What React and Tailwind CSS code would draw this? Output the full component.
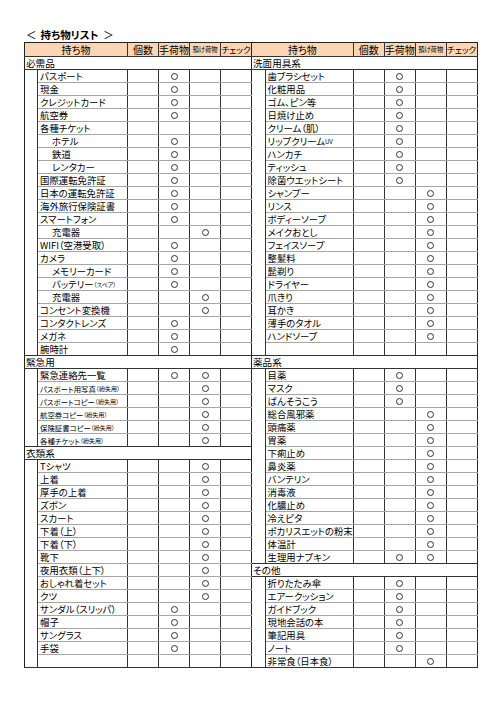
import React from "react";

// 0: なし / 1: 手荷物 / 2: 預け荷物 / 3: 両方
const it = (name, mark = 0, extra = {}) => ({ name, mark, ...extra });

const LEFT = [
  {
    cat: "必需品",
    items: [
      it("パスポート", 1),
      it("現金", 1),
      it("クレジットカード", 1),
      it("航空券", 1),
      it("各種チケット"),
      it("ホテル", 1, { sub: true }),
      it("鉄道", 1, { sub: true }),
      it("レンタカー", 1, { sub: true }),
      it("国際運転免許証", 1),
      it("日本の運転免許証", 1),
      it("海外旅行保険証書", 1),
      it("スマートフォン", 1),
      it("充電器", 2, { sub: true }),
      it("WIFI（空港受取）", 1),
      it("カメラ", 1),
      it("メモリーカード", 1, { sub: true }),
      it("バッテリー", 1, { sub: true, small: "（スペア）" }),
      it("充電器", 2, { sub: true }),
      it("コンセント変換機", 2),
      it("コンタクトレンズ", 1),
      it("メガネ", 1),
      it("腕時計", 1),
    ],
  },
  {
    cat: "緊急用",
    items: [
      it("緊急連絡先一覧", 3),
      it("パスポート用写真", 2, { tiny: true, small: "（紛失用）" }),
      it("パスポートコピー", 2, { tiny: true, small: "（紛失用）" }),
      it("航空券コピー", 2, { tiny: true, small: "（紛失用）" }),
      it("保険証書コピー", 2, { tiny: true, small: "（紛失用）" }),
      it("各種チケット", 2, { tiny: true, small: "（紛失用）" }),
    ],
  },
  {
    cat: "衣類系",
    items: [
      it("Tシャツ", 2),
      it("上着", 2),
      it("厚手の上着", 2),
      it("ズボン", 2),
      it("スカート", 2),
      it("下着（上）", 2),
      it("下着（下）", 2),
      it("靴下", 2),
      it("夜用衣類（上下）", 2),
      it("おしゃれ着セット", 2),
      it("クツ", 2),
      it("サンダル（スリッパ）", 1),
      it("帽子", 1),
      it("サングラス", 1),
      it("手袋", 1),
      it(""),
    ],
  },
];

const RIGHT = [
  {
    cat: "洗面用具系",
    items: [
      it("歯ブラシセット", 1),
      it("化粧用品", 1),
      it("ゴム、ピン等", 1),
      it("日焼け止め", 1),
      it("クリーム（肌）", 1),
      it("リップクリーム", 1, { small: "UV" }),
      it("ハンカチ", 1),
      it("ティッシュ", 1),
      it("除菌ウエットシート", 1),
      it("シャンプー", 2),
      it("リンス", 2),
      it("ボディーソープ", 2),
      it("メイクおとし", 2),
      it("フェイスソープ", 2),
      it("整髪料", 2),
      it("髭剃り", 2),
      it("ドライヤー", 2),
      it("爪きり", 2),
      it("耳かき", 2),
      it("薄手のタオル", 2),
      it("ハンドソープ", 2),
      it(""),
    ],
  },
  {
    cat: "薬品系",
    items: [
      it("目薬", 1),
      it("マスク", 1),
      it("ばんそうこう", 1),
      it("総合風邪薬", 2),
      it("頭痛薬", 2),
      it("胃薬", 2),
      it("下痢止め", 2),
      it("鼻炎薬", 2),
      it("バンテリン", 2),
      it("消毒液", 2),
      it("化膿止め", 2),
      it("冷えピタ", 2),
      it("ポカリスエットの粉末", 2),
      it("体温計", 2),
      it("生理用ナプキン", 3),
    ],
  },
  {
    cat: "その他",
    items: [
      it("折りたたみ傘", 1),
      it("エアークッション", 1),
      it("ガイドブック", 1),
      it("現地会話の本", 1),
      it("筆記用具", 1),
      it("ノート", 1),
      it("非常食（日本食）", 2),
    ],
  },
];

function Circle() {
  return <span className="block w-[7px] h-[7px] rounded-full border border-[#333]" />;
}

// セルの中身（高さ固定）
function Box({ className = "", children }) {
  return (
    <div className={`h-[12px] flex items-center whitespace-nowrap leading-[11px] ${className}`}>{children}</div>
  );
}

function Sheet({ groups, nameWidth, first }) {
  const vline = "border-l border-l-[#333]";
  const head = "p-0 font-normal border-b border-[#333]";
  return (
    <table
      className={`border-collapse table-fixed border-[#222] ${
        first ? "border-[1.5px]" : "border-y-[1.5px] border-r-[1.5px] border-l-0"
      }`}
    >
      <colgroup>
        <col className="w-[13px]" />
        <col style={{ width: nameWidth }} />
        <col className="w-[31px]" />
        <col className="w-[31px]" />
        <col className="w-[31px]" />
        <col className="w-[31px]" />
      </colgroup>
      <thead>
        <tr className="bg-[#fcd5b4]">
          <th colSpan={2} className={head}>
            <Box className="h-[13px] justify-center text-[10px]">持ち物</Box>
          </th>
          <th className={`${head} ${vline}`}>
            <Box className="h-[13px] justify-center text-[10px]">個数</Box>
          </th>
          <th className={`${head} ${vline}`}>
            <Box className="h-[13px] justify-center text-[10px]">手荷物</Box>
          </th>
          <th className={`${head} ${vline}`}>
            <Box className="h-[13px] justify-center text-[6.3px]">預け荷物</Box>
          </th>
          <th className={`${head} ${vline}`}>
            <Box className="h-[13px] justify-center text-[8.5px]">チェック</Box>
          </th>
        </tr>
      </thead>
      <tbody>
        {groups.map((g) => (
          <React.Fragment key={g.cat}>
            <tr>
              <td colSpan={6} className="p-0 border-b border-[#333]">
                <Box className="pl-px text-[9.6px]">{g.cat}</Box>
              </td>
            </tr>
            {g.items.map((item, i) => {
              const last = i === g.items.length - 1;
              const hline = last ? "border-b border-b-[#333]" : "border-b border-b-[#a6a6a6]";
              return (
                <tr key={g.cat + i}>
                  {i === 0 && (
                    <td rowSpan={g.items.length} className="p-0 border-r border-b border-[#333]" />
                  )}
                  <td className={`p-0 ${hline}`}>
                    <Box className={`${item.sub ? "pl-[14px]" : "pl-[2px]"} ${item.tiny ? "text-[7.4px]" : "text-[9.4px]"}`}>
                      {item.name}
                      {item.small && <span className="text-[6px]">{item.small}</span>}
                    </Box>
                  </td>
                  <td className={`p-0 ${vline} ${hline}`}>
                    <Box />
                  </td>
                  <td className={`p-0 ${vline} ${hline}`}>
                    <Box className="justify-center">{item.mark & 1 ? <Circle /> : null}</Box>
                  </td>
                  <td className={`p-0 ${vline} ${hline}`}>
                    <Box className="justify-center">{item.mark & 2 ? <Circle /> : null}</Box>
                  </td>
                  <td className={`p-0 ${vline} ${hline}`}>
                    <Box />
                  </td>
                </tr>
              );
            })}
          </React.Fragment>
        ))}
      </tbody>
    </table>
  );
}

export default function App() {
  return (
    <div className="w-[500px] h-[707px] bg-white text-black font-['Noto_Sans_CJK_JP','Noto_Sans',sans-serif] [font-feature-settings:'palt'] pt-[29px] pl-[24px]">
      {/* タイトル */}
      <div className="h-[13px] flex items-center pl-[2px] text-[10.5px] leading-none">
        <span>＜</span>
        <span className="ml-[4px] font-bold">持ち物リスト</span>
        <span className="ml-[5px]">＞</span>
      </div>
      <div className="flex items-start">
        <Sheet groups={LEFT} nameWidth="90px" first />
        <Sheet groups={RIGHT} nameWidth="84px" />
      </div>
    </div>
  );
}
